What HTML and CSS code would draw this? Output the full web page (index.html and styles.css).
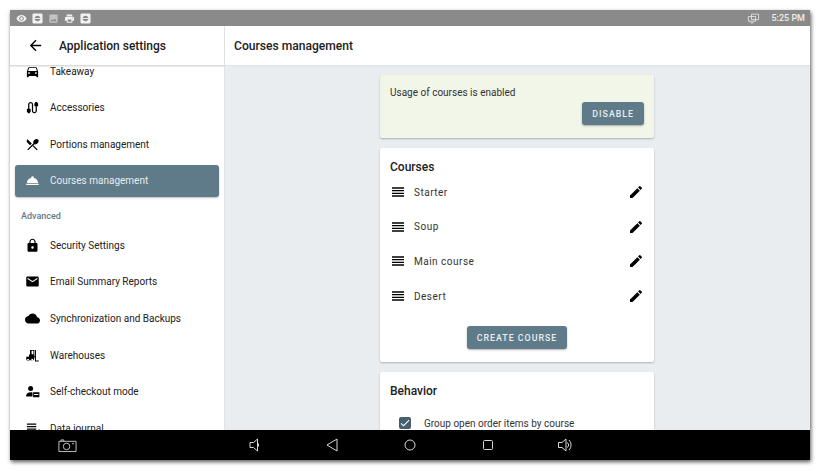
FILE: index.html
```html
<!DOCTYPE html>
<html lang="en">
<head>
  <meta charset="UTF-8">
  <title>Application settings</title>
  <link rel="stylesheet" href="styles.css">
</head>
<body>
  <div class="screen">
    <div class="status-bar">
      <div class="status-left">
        <svg class="st-icon" viewBox="0 0 24 24"><path d="M12 4.500C7 4.500 2.700 7.600 1 12c1.700 4.400 6 7.500 11 7.500s9.300-3.100 11-7.500c-1.700-4.400-6-7.500-11-7.500zM12 17c-2.800 0-5-2.200-5-5s2.200-5 5-5 5 2.200 5 5-2.200 5-5 5zm0-8c-1.700 0-3 1.300-3 3s1.300 3 3 3 3-1.300 3-3-1.300-3-3-3z"/></svg>
        <svg class="st-icon" viewBox="0 0 24 24"><path fill-rule="evenodd" d="M4 1h16a3 3 0 0 1 3 3v16a3 3 0 0 1-3 3H4a3 3 0 0 1-3-3V4a3 3 0 0 1 3-3zm8 5a6 6 0 1 0 0 12 6 6 0 0 0 0-12z"/><path d="M6 11h12v2H6z"/></svg>
        <svg class="st-icon dim" viewBox="0 0 24 24"><path d="M21 19V5c0-1.100-.9-2-2-2H5c-1.100 0-2 .9-2 2v14c0 1.100.9 2 2 2h14c1.100 0 2-.9 2-2zM8.500 13.500l2.500 3 3.500-4.500 4.500 6H5l3.500-4.500z"/></svg>
        <svg class="st-icon" viewBox="0 0 24 24"><path d="M19 8H5c-1.660 0-3 1.340-3 3v6h4v4h12v-4h4v-6c0-1.660-1.340-3-3-3zm-3 11H8v-5h8v5zm3-7c-.55 0-1-.45-1-1s.45-1 1-1 1 .45 1 1-.45 1-1 1zm-1-9H6v4h12V3z"/></svg>
        <svg class="st-icon" viewBox="0 0 24 24"><path fill-rule="evenodd" d="M4 1h16a3 3 0 0 1 3 3v16a3 3 0 0 1-3 3H4a3 3 0 0 1-3-3V4a3 3 0 0 1 3-3zm8 5a6 6 0 1 0 0 12 6 6 0 0 0 0-12z"/><path d="M6 11h12v2H6z"/></svg>
      </div>
      <div class="status-right">
        <svg class="st-screens" viewBox="0 0 16 14"><path d="M5.500 1.500h9v7h-9zM1.500 4.500h9v6h-9zM4 12.500h4"/></svg>
        <span class="clock">5:25 PM</span>
      </div>
    </div>

    <div class="app">
      <aside class="sidebar">
        <header class="side-head">
          <svg class="back" viewBox="0 0 24 24"><path d="M20 11H7.830l5.590-5.590L12 4l-8 8 8 8 1.410-1.410L7.830 13H20v-2z"/></svg>
          <span class="side-title">Application settings</span>
        </header>
        <nav class="side-scroll">
          <div class="side-list">
            <a class="nav-item">
              <svg viewBox="0 0 24 24"><path d="M18.920 6.010C18.720 5.420 18.160 5 17.500 5h-11c-.66 0-1.210.42-1.420 1.010L3 12v8c0 .55.45 1 1 1h1c.55 0 1-.45 1-1v-1h12v1c0 .55.45 1 1 1h1c.55 0 1-.45 1-1v-8l-2.080-5.990zM6.500 16c-.83 0-1.500-.67-1.500-1.500S5.670 13 6.500 13s1.500.67 1.500 1.500S7.330 16 6.500 16zm11 0c-.83 0-1.500-.67-1.500-1.500s.67-1.500 1.500-1.500 1.500.67 1.500 1.500-.67 1.500-1.500 1.500zM5 11l1.500-4.500h11L19 11H5z"/></svg>
              Takeaway
            </a>
            <a class="nav-item">
              <svg viewBox="0 0 24 24"><path d="M20 5V4c0-.55-.45-1-1-1h-2c-.55 0-1 .45-1 1v1h-1v4c0 .55.45 1 1 1h1v7c0 1.100-.9 2-2 2s-2-.9-2-2V7c0-2.210-1.790-4-4-4S5 4.790 5 7v7H4c-.55 0-1 .45-1 1v4h1v1c0 .55.45 1 1 1h2c.55 0 1-.45 1-1v-1h1v-4c0-.55-.45-1-1-1H7V7c0-1.100.9-2 2-2s2 .9 2 2v10c0 2.210 1.790 4 4 4s4-1.790 4-4v-7h1c.55 0 1-.45 1-1V5h-1z"/></svg>
              Accessories
            </a>
            <a class="nav-item">
              <svg viewBox="0 0 24 24"><path d="M14.880 11.530c1.530.71 3.680.21 5.270-1.380 1.910-1.910 2.280-4.650.81-6.120-1.460-1.460-4.200-1.100-6.120.81-1.590 1.590-2.090 3.740-1.380 5.270L3.700 19.870l1.410 1.410 9.770-9.750z"/><path d="M8.100 13.340l2.830-2.830L3.910 3.500c-1.560 1.560-1.560 4.090 0 5.660l4.190 4.180zM13.410 13L12 14.410l6.880 6.880 1.410-1.410z"/></svg>
              Portions management
            </a>
            <a class="nav-item active">
              <svg viewBox="0 0 24 24"><path d="M2 17h20v2H2zm11.840-9.210c.1-.24.16-.51.16-.79 0-1.100-.9-2-2-2s-2 .9-2 2c0 .28.06.55.16.79C6.250 8.600 3.270 11.930 3 16h18c-.27-4.070-3.250-7.400-7.160-8.210z"/></svg>
              Courses management
            </a>
            <div class="nav-section">Advanced</div>
            <a class="nav-item">
              <svg viewBox="0 0 24 24"><path d="M18 8h-1V6c0-2.760-2.240-5-5-5S7 3.240 7 6v2H6c-1.100 0-2 .9-2 2v10c0 1.100.9 2 2 2h12c1.100 0 2-.9 2-2V10c0-1.100-.9-2-2-2zm-6 9c-1.100 0-2-.9-2-2s.9-2 2-2 2 .9 2 2-.9 2-2 2zm3.100-9H8.900V6c0-1.710 1.390-3.100 3.100-3.100 1.710 0 3.100 1.390 3.100 3.100v2z"/></svg>
              Security Settings
            </a>
            <a class="nav-item">
              <svg viewBox="0 0 24 24"><path d="M20 4H4c-1.100 0-1.990.9-1.990 2L2 18c0 1.100.9 2 2 2h16c1.100 0 2-.9 2-2V6c0-1.100-.9-2-2-2zm0 4l-8 5-8-5V6l8 5 8-5v2z"/></svg>
              Email Summary Reports
            </a>
            <a class="nav-item">
              <svg viewBox="0 0 24 24"><path d="M19.350 10.040C18.670 6.590 15.640 4 12 4 9.110 4 6.600 5.640 5.350 8.040 2.340 8.360 0 10.910 0 14c0 3.310 2.690 6 6 6h13c2.760 0 5-2.240 5-5 0-2.640-2.050-4.780-4.650-4.960z"/></svg>
              Synchronization and Backups
            </a>
            <a class="nav-item">
              <svg viewBox="0 0 24 24"><path fill-rule="evenodd" d="M9 3h6v10h1V3h1.500v17H22v1.500h-6V15h-1.500a3.500 3.500 0 0 1-5 4.500H7A3 3 0 0 1 2 18v-4h4l1-4h1V3zm1.500 1.500V10h3V4.500zM5 17a1.500 1.500 0 1 0 0 3 1.500 1.500 0 0 0 0-3zm6.500 0a1.500 1.500 0 1 0 0 3 1.500 1.500 0 0 0 0-3z"/></svg>
              Warehouses
            </a>
            <a class="nav-item">
              <svg viewBox="0 0 24 24"><circle cx="9" cy="7" r="4"/><path d="M2 20v-2c0-3 4-5 7-5 1 0 2 .2 3 .6V20z"/><path fill-rule="evenodd" d="M13 13h10v8H13zm1.500 3v1.500h7V16z"/></svg>
              Self-checkout mode
            </a>
            <a class="nav-item">
              <svg viewBox="0 0 24 24"><path d="M3 4h15v2H3zM3 8h15v2H3zM3 12h15v2H3zM3 16h9v2H3zM22.500 13l1.400 1.400-7.400 7.400-4.400-4.400 1.400-1.400 3 3z"/></svg>
              Data journal
            </a>
          </div>
        </nav>
      </aside>

      <section class="main">
        <header class="main-head">Courses management</header>
        <div class="main-scroll">
          <div class="card notice">
            <p class="notice-text">Usage of courses is enabled</p>
            <div class="notice-actions"><button class="btn">DISABLE</button></div>
          </div>

          <div class="card courses">
            <h2 class="card-title">Courses</h2>
            <div class="course-row">
              <svg class="handle" viewBox="0 0 24 24"><path d="M3 15h18v-2H3v2zm0 4h18v-2H3v2zm0-8h18V9H3v2zm0-6v2h18V5H3z"/></svg>
              <span class="course-name">Starter</span>
              <svg class="edit" viewBox="0 0 24 24"><path d="M3 17.250V21h3.750L17.810 9.940l-3.750-3.750L3 17.250zM20.710 7.040c.39-.39.39-1.020 0-1.410l-2.340-2.340c-.39-.39-1.020-.39-1.410 0l-1.830 1.830 3.750 3.750 1.830-1.830z"/></svg>
            </div>
            <div class="course-row">
              <svg class="handle" viewBox="0 0 24 24"><path d="M3 15h18v-2H3v2zm0 4h18v-2H3v2zm0-8h18V9H3v2zm0-6v2h18V5H3z"/></svg>
              <span class="course-name">Soup</span>
              <svg class="edit" viewBox="0 0 24 24"><path d="M3 17.250V21h3.750L17.810 9.940l-3.750-3.750L3 17.250zM20.710 7.040c.39-.39.39-1.020 0-1.410l-2.340-2.340c-.39-.39-1.020-.39-1.410 0l-1.830 1.830 3.750 3.750 1.830-1.830z"/></svg>
            </div>
            <div class="course-row">
              <svg class="handle" viewBox="0 0 24 24"><path d="M3 15h18v-2H3v2zm0 4h18v-2H3v2zm0-8h18V9H3v2zm0-6v2h18V5H3z"/></svg>
              <span class="course-name">Main course</span>
              <svg class="edit" viewBox="0 0 24 24"><path d="M3 17.250V21h3.750L17.810 9.940l-3.750-3.750L3 17.250zM20.710 7.040c.39-.39.39-1.020 0-1.410l-2.340-2.340c-.39-.39-1.020-.39-1.410 0l-1.830 1.830 3.750 3.750 1.830-1.830z"/></svg>
            </div>
            <div class="course-row">
              <svg class="handle" viewBox="0 0 24 24"><path d="M3 15h18v-2H3v2zm0 4h18v-2H3v2zm0-8h18V9H3v2zm0-6v2h18V5H3z"/></svg>
              <span class="course-name">Desert</span>
              <svg class="edit" viewBox="0 0 24 24"><path d="M3 17.250V21h3.750L17.810 9.940l-3.750-3.750L3 17.250zM20.710 7.040c.39-.39.39-1.020 0-1.410l-2.340-2.340c-.39-.39-1.020-.39-1.410 0l-1.830 1.830 3.750 3.750 1.830-1.830z"/></svg>
            </div>
            <div class="course-actions"><button class="btn">CREATE COURSE</button></div>
          </div>

          <div class="card behavior">
            <h2 class="card-title">Behavior</h2>
            <label class="check-row">
              <span class="check">
                <svg viewBox="0 0 24 24"><path d="M9 16.200L4.800 12l-1.400 1.400L9 19 21 7l-1.400-1.400z"/></svg>
              </span>
              Group open order items by course
            </label>
          </div>
        </div>
      </section>
    </div>

    <div class="nav-bar">
      <svg class="camera" viewBox="0 0 20 14"><path d="M.750 2.500h18.500v11H.750zM3 2.500V1h3v1.500"/><circle cx="9" cy="8" r="3.500"/><path d="M15 5h2"/></svg>
      <div class="nav-buttons">
        <svg viewBox="-2.500 0 16 16"><path d="M1.500 5.500h3.500l4-3.500v12l-4-3.500H1.500zM9 5.500a3.500 3.500 0 0 1 0 5"/></svg>
        <svg viewBox="0 0 16 16"><path d="M13 2v12L3 8z"/></svg>
        <svg viewBox="0 0 16 16"><circle cx="8" cy="8" r="5"/></svg>
        <svg viewBox="0 0 16 16"><rect x="3.500" y="3.500" width="9" height="9" rx="1"/></svg>
        <svg viewBox="1.500 0 16 16"><path d="M2 5.500h3.500l4-3.500v12l-4-3.500H2zM11 5.500a3.500 3.500 0 0 1 0 5M12.500 3a7 7 0 0 1 0 10"/></svg>
      </div>
    </div>
  </div>
</body>
</html>
```

FILE: styles.css
```css
html, body {
  margin: 0;
  height: 100%;
  background: #fff;
  overflow: hidden;
}
body {
  padding: 10px 11px 11px 10px;
  box-sizing: border-box;
  font-family: Roboto, "Liberation Sans", sans-serif;
  color: #212121;
}
svg {
  display: block;
  flex: none;
}
.screen {
  width: 800px;
  height: 450px;
  display: flex;
  flex-direction: column;
  box-shadow: 1px 2px 4px rgba(0, 0, 0, 0.65);
}

/* status bar */
.status-bar {
  height: 16px;
  flex: none;
  background: #8a8a8a;
  display: flex;
  align-items: center;
  justify-content: space-between;
  padding: 0 5px 0 6px;
}
.status-left {
  display: flex;
  gap: 5px;
}
.st-icon {
  width: 11px;
  height: 11px;
  fill: #f2f2f2;
}
.st-icon.dim {
  fill: #c4c4c4;
}
.status-right {
  display: flex;
  align-items: center;
  gap: 11px;
}
.st-screens {
  width: 13px;
  height: 11px;
  fill: none;
  stroke: #eee;
  stroke-width: 1;
}
.clock {
  font-size: 9px;
  font-weight: 500;
  color: #eee;
}

.app {
  flex: 1;
  min-height: 0;
  display: flex;
}

/* left column */
.sidebar {
  width: 214px;
  flex: none;
  display: flex;
  flex-direction: column;
  background: #fff;
  border-right: 1px solid #dfe3e6;
}
.side-head {
  height: 40px;
  flex: none;
  box-sizing: border-box;
  display: flex;
  align-items: center;
  padding-left: 17px;
  gap: 15px;
  border-bottom: 1px solid #dcdcdc;
  box-shadow: 0 1px 1px rgba(0, 0, 0, 0.08);
  position: relative;
}
.back {
  width: 17px;
  height: 17px;
}
.side-title {
  font-size: 12px;
  font-weight: 500;
}
.side-scroll {
  flex: 1;
  min-height: 0;
  overflow: hidden;
}
.side-list {
  margin-top: -11px;
  padding: 0 5px;
}
.nav-item {
  height: 32px;
  margin-bottom: 4.600px;
  display: flex;
  align-items: center;
  padding-left: 10px;
  gap: 10px;
  font-size: 10px;
  border-radius: 3px;
}
.nav-item svg {
  width: 15px;
  height: 15px;
}
.nav-item.active {
  background: #5f7a89;
  color: #e6ecef;
  box-shadow: 0 1px 2px rgba(0, 0, 0, 0.25);
}
.nav-item.active svg {
  fill: #fff;
}
.nav-section {
  height: 32px;
  margin-top: -4px;
  box-sizing: border-box;
  padding: 13.500px 0 0 6px;
  font-size: 9px;
  font-weight: 500;
  color: #5f7a89;
}

/* right column */
.main {
  flex: 1;
  min-width: 0;
  display: flex;
  flex-direction: column;
  background: #e9edf0;
}
.main-head {
  height: 40px;
  flex: none;
  box-sizing: border-box;
  display: flex;
  align-items: center;
  padding-left: 9px;
  background: #fff;
  border-bottom: 1px solid #dfe3e6;
  font-size: 12.100px;
  font-weight: 500;
}
.main-scroll {
  flex: 1;
  min-height: 0;
  overflow: hidden;
  padding-top: 9px;
  display: flex;
  flex-direction: column;
  align-items: center;
  gap: 10px;
}
.card {
  width: 274px;
  margin-right: 1px;
  flex: none;
  box-sizing: border-box;
  background: #fff;
  border-radius: 2px;
  box-shadow: 0 1px 2px rgba(0, 0, 0, 0.25);
}
.notice {
  height: 63px;
  background: #f1f6e9;
  padding: 11px 10px 0;
}
.notice-text {
  margin: 0;
  font-size: 10px;
  line-height: 13px;
  color: #333;
}
.notice-actions {
  display: flex;
  justify-content: flex-end;
  margin-top: 3px;
}
.btn {
  height: 23px;
  padding: 0 10px;
  border: none;
  border-radius: 3px;
  background: #5f7a89;
  color: #e9eef1;
  font-family: inherit;
  font-size: 8.800px;
  font-weight: 500;
  letter-spacing: 1px;
  box-shadow: 0 1px 2px rgba(0, 0, 0, 0.3);
}
.courses {
  height: 214px;
  padding: 12px 10px 0;
}
.card-title {
  margin: 0;
  font-size: 12px;
  line-height: 14px;
  font-weight: 500;
}
.course-row {
  height: 34.600px;
  display: flex;
  align-items: center;
  gap: 8px;
}
.courses .card-title + .course-row {
  margin-top: 1px;
}
.handle {
  width: 16px;
  height: 16px;
}
.course-name {
  flex: 1;
  font-size: 10px;
  letter-spacing: 0.5px;
  color: #333;
}
.edit {
  width: 16px;
  height: 16px;
}
.course-actions {
  display: flex;
  justify-content: center;
  margin-top: 13px;
}
.behavior {
  height: 80px;
  padding: 12px 10px 0;
}
.check-row {
  display: flex;
  align-items: center;
  gap: 13px;
  margin: 19px 0 0 9px;
  font-size: 10px;
  color: #333;
}
.check {
  width: 12px;
  height: 12px;
  border-radius: 2px;
  background: #455f6e;
}
.check svg {
  width: 12px;
  height: 12px;
  fill: #fff;
}

/* android navigation */
.nav-bar {
  height: 30px;
  flex: none;
  background: #000;
  display: flex;
  align-items: center;
}
.camera {
  width: 19px;
  height: 13px;
  margin-left: 48px;
  fill: none;
  stroke: #ccc;
  stroke-width: 1;
}
.nav-buttons {
  margin-left: 169px;
  display: flex;
  gap: 62px;
}
.nav-buttons svg {
  width: 16px;
  height: 16px;
  fill: none;
  stroke: #d8d8d8;
  stroke-width: 1;
}
```
